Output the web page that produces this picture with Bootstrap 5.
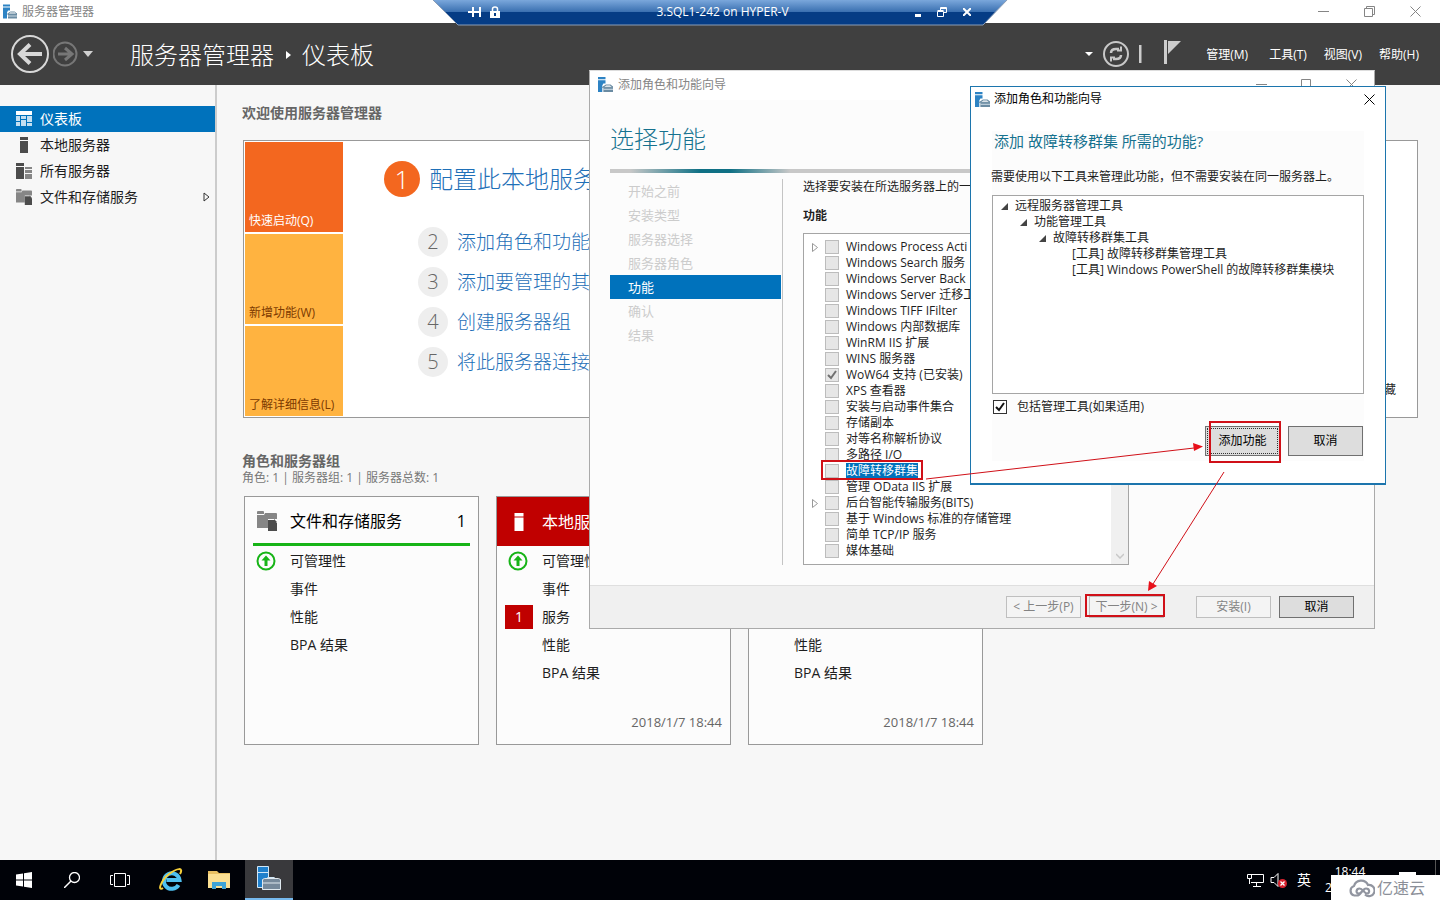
<!DOCTYPE html>
<html lang="zh-CN">
<head>
<meta charset="utf-8">
<meta name="viewport" content="width=device-width, initial-scale=1">
<title>服务器管理器</title>
<link href="https://cdn.jsdelivr.net/npm/bootstrap@5.3.0/dist/css/bootstrap.min.css" rel="stylesheet">
<style>
  body { font: 12px/16px "Open Sans", "Noto Sans CJK SC", sans-serif; color: #1e1e1e; background: #f7f7f7; }
  a { text-decoration: none; }
  button { font: inherit; color: inherit; }
  svg { display: block; flex: none; }
  .plain-btn { border: 0; background: none; padding: 0; }

  .app-title { height: 23px; background: #fff; color: #858585; padding: 0 19px 0 3px; gap: 5px; }
  .app-title .win-ctl { gap: 35px; }
  .app-head { height: 62px; background: #404040; color: #fff; padding: 0 21px 0 11px; }
  .crumb { font-size: 24px; line-height: 32px; font-weight: 300; margin-left: 37px; padding-top: 2px; }
  .menu-links { padding-top: 2px; }
  .menu-links a { color: #fff; margin-left: 17px; }
  .menu-links a:first-child { margin-left: 24px; }
  .head-tools { gap: 9px; }

  .side { width: 217px; border-right: 2px solid #ccc; padding-top: 21px; flex: none; }
  .side a { height: 26px; font-size: 14px; color: #1e1e1e; padding: 0 4px 0 15px; gap: 7px; }
  .side a.on { background: #0072bc; color: #fff; }

  .dash { padding: 19px 22px 0 25px; }
  .dash h2 { font-size: 14px; line-height: 18px; font-weight: 700; color: #666; margin: 0; }
  .welcome { border: 1px solid #999; background: #fff; height: 278px; margin: 18px 0 0 1px; padding: 1px; }
  .tiles { width: 98px; gap: 2px; }
  .tile { flex: 1; background: #ffb340; color: #7c3a00; padding: 0 4px 3px; display: flex; align-items: flex-end; white-space: nowrap; }
  .tile.hot { background: #f3671f; color: #fff; }
  .steps { padding: 18px 0 0 40px; white-space: nowrap; font-weight: 300; }
  .steps a { color: #1f70b8; font-size: 19px; line-height: 26px; }
  .steps li { height: 30px; margin-bottom: 10px; gap: 9px; padding-left: 35px; }
  .steps li.first { height: 38px; margin-bottom: 29px; padding-left: 1px; }
  .steps li.first a { font-size: 24px; line-height: 32px; }
  .num { width: 30px; height: 30px; border-radius: 50%; background: #eee; color: #666; font-size: 20px; display: flex; align-items: center; justify-content: center; }
  .first .num { width: 36px; height: 36px; background: #f3671f; color: #fff; font-size: 26px; }
  .hide-link { color: #1e1e1e; margin: auto 20px 18px auto; }

  .group-head { margin-top: 34px; color: #777; }
  .groups { gap: 17px; margin-top: 10px; padding-left: 2px; }
  .group { width: 235px; height: 249px; border: 1px solid #999; background: #fcfcfc; color: #1e1e1e; }
  .group-top { height: 49px; font-size: 16px; color: #000; padding: 0 12px 0 11px; }
  .group-top.ok { border-bottom: 3px solid #17b417; margin: 0 8px; padding: 1px 4px 0 3px; }
  .group-top.bad { background: #c00000; color: #fff; }
  .ico { width: 34px; flex: none; display: flex; }
  .group ul { padding-top: 1px; }
  .group li { height: 28px; font-size: 14px; padding-left: 8px; }
  .group li .ico { width: 37px; padding-left: 3px; }
  .group li .flagged { padding-left: 0; }
  .alert-num { width: 28px; height: 24px; background: #c00000; color: #fff; display: flex; align-items: center; justify-content: center; }
  .stamp { color: #666; font-size: 13px; padding: 0 8px 14px; text-align: right; margin-top: auto; }

  .conn { left: 50%; top: 0; width: 576px; height: 26px; transform: translateX(-50%); color: #fff; }
  .conn .inner { padding: 0 37px 2px 36px; height: 26px; }
  .conn-name { padding-left: 30px; }

  .wizard { left: 589px; top: 70px; width: 786px; height: 559px; border: 1px solid #aaa; border-top-color: #ddd; background: #fcfcfc; }
  .wizard-title { height: 29px; background: #fff; color: #858585; padding: 0 17px 2px 8px; gap: 5px; }
  .wizard-title .win-ctl { gap: 34px; }
  .wizard h1 { color: #16728f; font-size: 24px; line-height: 32px; font-weight: 300; margin: 23px 0 14px 20px; }
  .bar { height: 4px; margin-left: 20px; background: linear-gradient(90deg, #c8c8c8 20px, #0f7085 90px, #0f7085 120px, #c8c8c8 180px); }
  .wiz-nav { width: 173px; margin: 6px 0 0 20px; border-right: 1px solid #c4c4c4; height: 386px; }
  .wiz-nav span { display: flex; align-items: center; height: 24px; width: 171px; padding-left: 18px; font-size: 13px; color: #ccc; }
  .wiz-nav span.on { background: #0072bc; color: #fff; }
  .wiz-main { padding: 6px 0 0 20px; }
  .list-name { margin-top: 13px; font-weight: 700; }
  .feats { width: 326px; height: 332px; border: 1px solid #a5a5a5; background: #fff; margin-top: 9px; }
  .feats li { height: 16px; }
  .feats ul { padding: 5px 0 0 8px; white-space: nowrap; }
  .twist { width: 13px; flex: none; }
  .tick { appearance: none; width: 14px; height: 14px; border: 1px solid #bcbcbc; background: #e6e6e6; margin: 0 7px 0 0; flex: none; }
  .tick:checked { background: #e6e6e6 url("data:image/svg+xml,%3Csvg xmlns='http://www.w3.org/2000/svg' viewBox='0 0 12 12'%3E%3Cpath d='M2 6l3 3 5-7' fill='none' stroke='%23707070' stroke-width='2'/%3E%3C/svg%3E"); }
  .tick.live { border-color: #333; background-color: #fff; margin: 0 10px 0 1px; }
  .tick.live:checked { background-image: url("data:image/svg+xml,%3Csvg xmlns='http://www.w3.org/2000/svg' viewBox='0 0 12 12'%3E%3Cpath d='M2 6l3 3 5-7' fill='none' stroke='%23111' stroke-width='2'/%3E%3C/svg%3E"); }
  .picked { background: #0072bc; color: #fff; }
  .scroll { width: 17px; background: #f0f0f0; display: flex; align-items: flex-end; justify-content: center; padding-bottom: 5px; }
  .wiz-foot { height: 43px; background: #f0f0f0; border-top: 1px solid #dfdfdf; padding-right: 20px; gap: 8px; }
  .win-btn { width: 75px; height: 22px; border: 1px solid #707070; background: #ddd; color: #000; padding: 0; white-space: nowrap; }
  .win-btn:disabled { border-color: #bfbfbf; background: #f4f4f4; color: #838383; }
  .win-btn.tall { height: 30px; }
  .win-btn.focus-dots { outline: 1px dotted #333; outline-offset: -3px; }

  .dlg { left: 970px; top: 86px; width: 416px; height: 399px; border: 1px solid #1c75ad; border-bottom-width: 2px; background: #fff; color: #1e1e1e; }
  .dlg-title { height: 24px; color: #000; padding: 0 10px 0 4px; gap: 4px; }
  .dlg-body { margin: 20px 21px 0; background: #fcfcfc; height: 330px; }
  .dlg h2 { color: #16728f; font-size: 15px; line-height: 20px; font-weight: 400; margin: 0; padding-left: 2px; }
  .dlg p { margin: 18px 0 10px -1px; white-space: nowrap; }
  .tree { height: 199px; border: 1px solid #a5a5a5; background: #fff; padding: 2px 0 0 8px; list-style: none; margin: 0; white-space: nowrap; }
  .tree ul { list-style: none; padding-left: 19px; }
  .tree .leaf { padding-left: 14px; }
  .node { display: flex; align-items: center; gap: 7px; height: 16px; }
  .dlg-opt { margin-top: 5px; }
  .dlg-actions { gap: 8px; margin-top: 11px; padding-right: 1px; }
  .marks { left: 0; top: 0; pointer-events: none; }

  .taskbar { height: 40px; background: #000208; color: #fff; }
  .taskbar .slot { width: 48px; height: 40px; display: flex; align-items: center; justify-content: center; }
  .slot.pinned { margin-left: 3px; }
  .slot.active { background: #39393c; border-bottom: 2px solid #76b9ed; margin-left: 2px; }
  .tray { gap: 6px; padding-right: 24px; }
  .ime { font-size: 14px; }
  .note { margin: 0 0 10px 18px; }
  .peek { right: 4px; top: 0; width: 1px; height: 15px; background: #555; }
  .brand { right: 0; bottom: 0; width: 109px; height: 25px; background: #fff; color: #8b8f98; font-size: 16px; gap: 2px; padding-left: 18px; }
</style>
</head>
<body class="vh-100 overflow-hidden position-relative d-flex flex-column">

<svg width="0" height="0" class="position-absolute" aria-hidden="true">
  <symbol id="sm" viewBox="0 0 14 14"><path d="M0 0h7v2H0zM0 3h7v3H5l-1 2v6H0z" fill="#2d83c4"/><path d="M5 9h9v5H5z" fill="#6b8ca3"/><path d="M4.500 9.500l3-2h4l2.500 2z" fill="#fff" stroke="#6b8ca3"/><path d="M5 11.500h9" stroke="#c9d8e2"/></symbol>
  <symbol id="srv" viewBox="0 0 16 16"><path d="M4 0h8v3H4zM4 4h8v12H4z" fill="currentColor"/></symbol>
  <symbol id="files" viewBox="0 0 20 20"><path d="M0 1q0-1 1-1h5q1 0 1 1v2H0zM0 4h7l1-2h11q1 0 1 1v5h-9v9H0z" fill="#868686"/><path d="M11 9h6l3 3v8h-9z" fill="#4c4c4c"/><path d="M17 8l3 3h-3z" fill="#4c4c4c"/></symbol>
  <symbol id="up" viewBox="0 0 20 20"><circle cx="10" cy="10" r="8.500" fill="none" stroke="#17b417" stroke-width="2"/><path d="M10 4.500l4.500 5h-3V15h-3V9.500h-3z" fill="#17b417"/></symbol>
  <symbol id="min" viewBox="0 0 11 11"><path d="M0 5.500h11" stroke="currentColor"/></symbol>
  <symbol id="close" viewBox="0 0 11 11"><path d="M.5.500l10 10M10.500.500l-10 10" stroke="currentColor"/></symbol>
  <symbol id="fold" viewBox="0 0 6 9"><path d="M.5.500v8l5-4z" fill="#fff" stroke="#999"/></symbol>
  <symbol id="open" viewBox="0 0 7 7"><path d="M7 0v7H0z" fill="#444"/></symbol>
</svg>

<header class="app-title d-flex align-items-center">
  <svg width="14" height="15"><use href="#sm"/></svg><span>服务器管理器</span>
  <div class="win-ctl d-flex ms-auto">
    <button class="plain-btn" aria-label="最小化"><svg width="11" height="11"><use href="#min"/></svg></button>
    <button class="plain-btn" aria-label="还原"><svg width="11" height="11" fill="none" stroke="currentColor"><path d="M.5 2.500h8v8h-8zM2.500 2.500v-2h8v8h-2"/></svg></button>
    <button class="plain-btn" aria-label="关闭"><svg width="11" height="11"><use href="#close"/></svg></button>
  </div>
</header>

<nav class="app-head d-flex align-items-center">
  <button class="plain-btn" aria-label="后退"><svg width="38" height="38" viewBox="0 0 38 38" fill="none" stroke="#d8d8d8"><circle cx="19" cy="19" r="18" stroke-width="2"/><path d="M31 19H9M19 9.500L9 19l10 9.500" stroke-width="4"/></svg></button>
  <button class="plain-btn ms-1" aria-label="前进"><svg width="26" height="26" viewBox="0 0 26 26" fill="none" stroke="#777"><circle cx="12" cy="13" r="11.500" stroke-width="2"/><path d="M5 13h14M12 7l7 6-7 6" stroke-width="3"/></svg></button>
  <svg class="ms-1" width="10" height="6"><path d="M0 0h10L5 6z" fill="#d0d0d0"/></svg>
  <div class="crumb d-flex align-items-center"><span>服务器管理器</span><svg class="mx-2" width="12" height="8"><path d="M4 0v8l5-4z" fill="#fff"/></svg><span>仪表板</span></div>
  <div class="d-flex align-items-center ms-auto">
    <div class="head-tools d-flex align-items-center">
      <svg width="8" height="4"><path d="M0 0h8L4 4z" fill="#fff"/></svg>
      <button class="plain-btn" aria-label="刷新"><svg width="28" height="28" viewBox="0 0 28 28" fill="none" stroke="#c8c8c8"><circle cx="14" cy="14" r="12" stroke-width="2"/><path d="M9 13q0-4 5-4h3M19 15q0 4-5 4h-3" stroke-width="2.500"/><path d="M15 10.500h4V6.500M13 17.500H9v4" stroke-width="2"/></svg></button>
      <svg width="5" height="18"><path d="M0 0h2.500v18H0z" fill="#ccc"/></svg>
    </div>
    <button class="plain-btn ms-3 ps-1 pb-1" aria-label="通知"><svg width="18" height="24" fill="#ccc"><path d="M0 0h3v24H0zM4 1h13L4 14z"/></svg></button>
    <div class="menu-links"><a href="#">管理(M)</a><a href="#" class="ps-1">工具(T)</a><a href="#">视图(V)</a><a href="#">帮助(H)</a></div>
  </div>
</nav>

<div class="d-flex flex-fill overflow-hidden">
  <nav class="side">
    <a href="#" class="on d-flex align-items-center"><svg width="18" height="16" viewBox="0 0 18 16" fill="#c4dff1"><path d="M1 0h16v4H1z" fill="#fff"/><path d="M1 5h4v5H1zM1 11h4v4H1zM6 5h5v3H6zM6 9h5v6H6zM12 5h5v6h-5zM12 12h5v3h-5z"/></svg>仪表板</a>
    <a href="#" class="d-flex align-items-center"><svg width="18" height="16" color="#4c4c4c"><use href="#srv"/></svg>本地服务器</a>
    <a href="#" class="d-flex align-items-center"><svg width="18" height="16" viewBox="0 0 18 16"><path d="M1 0h8v3H1zM1 4h8v12H1z" fill="#4c4c4c"/><path d="M10 4h7v2h-7zM10 7h7v3h-7zM10 11h7v5h-7z" fill="#868686"/></svg>所有服务器</a>
    <a href="#" class="d-flex align-items-center"><svg width="18" height="16"><use href="#files"/></svg>文件和存储服务<svg class="ms-auto" width="8" height="10"><path d="M1 1v8l5-4z" fill="none" stroke="#333"/></svg></a>
  </nav>

  <main class="dash flex-fill">
    <h2>欢迎使用服务器管理器</h2>
    <section class="welcome d-flex">
      <div class="tiles d-flex flex-column">
        <button class="plain-btn tile hot">快速启动(Q)</button>
        <button class="plain-btn tile">新增功能(W)</button>
        <button class="plain-btn tile">了解详细信息(L)</button>
      </div>
      <ol class="steps list-unstyled m-0">
        <li class="first d-flex align-items-center"><span class="num">1</span><a href="#">配置此本地服务器</a></li>
        <li class="d-flex align-items-center"><span class="num">2</span><a href="#">添加角色和功能</a></li>
        <li class="d-flex align-items-center"><span class="num">3</span><a href="#">添加要管理的其他</a></li>
        <li class="d-flex align-items-center"><span class="num">4</span><a href="#">创建服务器组</a></li>
        <li class="d-flex align-items-center"><span class="num">5</span><a href="#">将此服务器连接</a></li>
      </ol>
      <a href="#" class="hide-link">隐藏</a>
    </section>

    <div class="group-head"><h2>角色和服务器组</h2>角色: 1 | 服务器组: 1 | 服务器总数: 1</div>
    <div class="groups d-flex">
      <section class="group d-flex flex-column">
        <div class="group-top ok d-flex align-items-center"><span class="ico"><svg width="22" height="20"><use href="#files"/></svg></span>文件和存储服务<span class="ms-auto">1</span></div>
        <ul class="list-unstyled m-0">
          <li class="d-flex align-items-center"><span class="ico"><svg width="20" height="20"><use href="#up"/></svg></span>可管理性</li>
          <li class="d-flex align-items-center"><span class="ico"></span>事件</li>
          <li class="d-flex align-items-center"><span class="ico"></span>性能</li>
          <li class="d-flex align-items-center"><span class="ico"></span>BPA 结果</li>
        </ul>
      </section>
      <section class="group d-flex flex-column">
        <div class="group-top bad d-flex align-items-center"><span class="ico"><svg width="22" height="18"><use href="#srv"/></svg></span>本地服务器</div>
        <ul class="list-unstyled m-0">
          <li class="d-flex align-items-center"><span class="ico"><svg width="20" height="20"><use href="#up"/></svg></span>可管理性</li>
          <li class="d-flex align-items-center"><span class="ico"></span>事件</li>
          <li class="d-flex align-items-center"><span class="ico flagged"><span class="alert-num">1</span></span>服务</li>
          <li class="d-flex align-items-center"><span class="ico"></span>性能</li>
          <li class="d-flex align-items-center"><span class="ico"></span>BPA 结果</li>
        </ul>
        <div class="stamp">2018/1/7 18:44</div>
      </section>
      <section class="group d-flex flex-column">
        <div class="group-top bad d-flex align-items-center"></div>
        <ul class="list-unstyled m-0">
          <li></li>
          <li></li>
          <li class="d-flex align-items-center"><span class="ico flagged"><span class="alert-num"></span></span></li>
          <li class="d-flex align-items-center"><span class="ico"></span>性能</li>
          <li class="d-flex align-items-center"><span class="ico"></span>BPA 结果</li>
        </ul>
        <div class="stamp">2018/1/7 18:44</div>
      </section>
    </div>
  </main>
</div>

<footer class="taskbar d-flex position-relative">
  <button class="plain-btn slot" aria-label="开始"><svg width="16" height="16" fill="#fff"><path d="M0 2.500L7 1.500v6H0zM8 1.300L16 0v7.500H8zM0 8.500h7v6l-7-1zM8 8.500h8V16l-8-1.300z"/></svg></button>
  <button class="plain-btn slot" aria-label="搜索"><svg width="16" height="16" fill="none" stroke="#fff"><circle cx="10.500" cy="5.500" r="5" stroke-width="1.300"/><path d="M7 9l-7 7" stroke-width="1.500"/></svg></button>
  <button class="plain-btn slot" aria-label="任务视图"><svg width="20" height="14" fill="none" stroke="#fff"><path d="M4.500.500h11v13h-11zM3 2.500H.5v9H3M17 2.500h2.500v9H17"/></svg></button>
  <button class="plain-btn slot pinned" aria-label="Internet Explorer"><svg width="24" height="24" viewBox="0 0 24 24" fill="none"><path d="M19.500 17a7.800 7.800 0 1 1 1-5H7.500" stroke="#4ec0f0" stroke-width="4"/><path d="M4 20C-2 24 2 12 10 6S25-1 21 6" stroke="#f5cf3a" stroke-width="2"/></svg></button>
  <button class="plain-btn slot" aria-label="文件资源管理器"><svg width="22" height="18" viewBox="0 0 22 18"><path d="M0 0h9l2 2h11v15H0z" fill="#e9c062"/><path d="M0 3h22v14H0z" fill="#fbdf92"/><path d="M4 18v-7h14v7h-4v-3H8v3z" fill="#3fa3d6"/></svg></button>
  <button class="plain-btn slot active" aria-label="服务器管理器"><svg width="24" height="26" viewBox="0 0 24 26"><path d="M.5.500h11v21H.5z" fill="#1f80cc" stroke="#cfe6f7"/><path d="M0 6.500h12" stroke="#cfe6f7"/><path d="M9 13l2-1.500h6l2 1.500" fill="none" stroke="#cfe6f7"/><path d="M5.500 13.500l2-1h14l2 1v10h-18z" fill="#76899b" stroke="#dfe8ee"/><path d="M6 17h17" stroke="#dfe8ee"/></svg></button>
  <div class="tray d-flex align-items-center ms-auto">
    <svg width="17" height="14" fill="none" stroke="#fff"><path d="M4 1.500h12.500v8H4M9.500 10v3M6 13.500h8M.5 1.500h4v4h-4zM2.500 6v5"/></svg>
    <svg width="17" height="15"><path d="M1 4.500h3l4-4v13l-4-4H1z" fill="none" stroke="#fff"/><circle cx="12.500" cy="10.500" r="4.500" fill="#d8232f"/><path d="M10.500 8.500l4 4M14.500 8.500l-4 4" stroke="#fff" stroke-width="1.300"/></svg>
    <span class="ime px-1">英</span>
    <div class="text-center ps-1"><div>18:44</div><div>2018/1/7</div></div>
    <svg class="note" width="17" height="6"><path d="M0 0h17v6H0z" fill="#fff"/></svg>
  </div>
  <div class="peek position-absolute"></div>
  <div class="brand position-absolute d-flex align-items-center">
    <svg width="26" height="20" viewBox="0 0 26 20" fill="none" stroke="#9195a0" stroke-width="2.200"><path d="M5 17.500a5 5 0 0 1 0-9.500 7.500 7.500 0 0 1 14-1 5.600 5.600 0 1 1-3 9.500"/><path d="M5 17.500h3c4 0 5-7 9-7s4 5 1 5-4-5-7.500-5-4 5-1 5 4-3 6-4"/></svg>亿速云
  </div>
</footer>

<div class="conn position-absolute">
  <svg class="position-absolute" width="576" height="26"><defs><linearGradient id="cg" x2="0" y2="1"><stop offset="0" stop-color="#80acdf"/><stop offset=".5" stop-color="#396fb0"/><stop offset=".51" stop-color="#053c85"/><stop offset="1" stop-color="#053c85"/></linearGradient></defs><path d="M0-1h576l-25 26H26z" fill="url(#cg)" stroke="#8a9cb5"/></svg>
  <div class="inner position-relative d-flex align-items-center">
    <button class="plain-btn" aria-label="固定"><svg width="14" height="10" fill="none" stroke="#fff" stroke-width="2"><path d="M0 5h5M5 0v10M5 5h7M12 0v10"/></svg></button>
    <svg class="ms-2" width="10" height="12"><path d="M2.500 5V3q0-2 2.500-2t2.500 2v2" fill="none" stroke="#fff" stroke-width="1.500"/><path d="M0 5h10v7H0z" fill="#fff"/><path d="M5 7v3" stroke="#053c85" stroke-width="2"/></svg>
    <span class="conn-name flex-fill text-center">3.SQL1-242 on HYPER-V</span>
    <button class="plain-btn" aria-label="最小化"><svg width="6" height="10"><path d="M0 8.500h6" stroke="#fff" stroke-width="3"/></svg></button>
    <button class="plain-btn ms-3" aria-label="还原"><svg width="10" height="10" fill="none" stroke="#fff"><path d="M.5 4.500h6v5h-6zM.5 3.500h6M3.500 3V.5h6v5H7M3.500 1.500h6"/></svg></button>
    <button class="plain-btn ms-3" aria-label="关闭"><svg width="8" height="8"><path d="M0 0l8 8M8 0L0 8" stroke="#fff" stroke-width="2"/></svg></button>
  </div>
</div>

<section class="wizard position-absolute d-flex flex-column">
  <div class="wizard-title d-flex align-items-center">
    <svg width="15" height="15"><use href="#sm"/></svg><span>添加角色和功能向导</span>
    <div class="win-ctl d-flex ms-auto">
      <button class="plain-btn" aria-label="最小化"><svg width="11" height="11"><use href="#min"/></svg></button>
      <button class="plain-btn" aria-label="最大化"><svg width="11" height="11"><path d="M.5.500h9v10h-9z" fill="none" stroke="currentColor"/></svg></button>
      <button class="plain-btn" aria-label="关闭"><svg width="11" height="11"><use href="#close"/></svg></button>
    </div>
  </div>
  <h1>选择功能</h1>
  <div class="bar"></div>
  <div class="d-flex flex-fill">
    <div class="wiz-nav">
      <span>开始之前</span><span>安装类型</span><span>服务器选择</span><span>服务器角色</span><span class="on">功能</span><span>确认</span><span>结果</span>
    </div>
    <div class="wiz-main">
      <div class="text-nowrap">选择要安装在所选服务器上的一个</div>
      <div class="list-name">功能</div>
      <div class="feats d-flex">
        <ul class="list-unstyled flex-fill m-0">
          <li class="d-flex align-items-center"><span class="twist"><svg width="6" height="9"><use href="#fold"/></svg></span><input class="tick" type="checkbox" disabled id="f1"><label for="f1">Windows Process Acti</label></li>
          <li class="d-flex align-items-center"><span class="twist"></span><input class="tick" type="checkbox" disabled id="f2"><label for="f2">Windows Search 服务</label></li>
          <li class="d-flex align-items-center"><span class="twist"></span><input class="tick" type="checkbox" disabled id="f3"><label for="f3">Windows Server Back</label></li>
          <li class="d-flex align-items-center"><span class="twist"></span><input class="tick" type="checkbox" disabled id="f4"><label for="f4">Windows Server 迁移工</label></li>
          <li class="d-flex align-items-center"><span class="twist"></span><input class="tick" type="checkbox" disabled id="f5"><label for="f5">Windows TIFF IFilter</label></li>
          <li class="d-flex align-items-center"><span class="twist"></span><input class="tick" type="checkbox" disabled id="f6"><label for="f6">Windows 内部数据库</label></li>
          <li class="d-flex align-items-center"><span class="twist"></span><input class="tick" type="checkbox" disabled id="f7"><label for="f7">WinRM IIS 扩展</label></li>
          <li class="d-flex align-items-center"><span class="twist"></span><input class="tick" type="checkbox" disabled id="f8"><label for="f8">WINS 服务器</label></li>
          <li class="d-flex align-items-center"><span class="twist"></span><input class="tick" type="checkbox" disabled checked id="f9"><label for="f9">WoW64 支持 (已安装)</label></li>
          <li class="d-flex align-items-center"><span class="twist"></span><input class="tick" type="checkbox" disabled id="f10"><label for="f10">XPS 查看器</label></li>
          <li class="d-flex align-items-center"><span class="twist"></span><input class="tick" type="checkbox" disabled id="f11"><label for="f11">安装与启动事件集合</label></li>
          <li class="d-flex align-items-center"><span class="twist"></span><input class="tick" type="checkbox" disabled id="f12"><label for="f12">存储副本</label></li>
          <li class="d-flex align-items-center"><span class="twist"></span><input class="tick" type="checkbox" disabled id="f13"><label for="f13">对等名称解析协议</label></li>
          <li class="d-flex align-items-center"><span class="twist"></span><input class="tick" type="checkbox" disabled id="f14"><label for="f14">多路径 I/O</label></li>
          <li class="d-flex align-items-center"><span class="twist"></span><input class="tick" type="checkbox" disabled id="f15"><label for="f15" class="picked">故障转移群集</label></li>
          <li class="d-flex align-items-center"><span class="twist"></span><input class="tick" type="checkbox" disabled id="f16"><label for="f16">管理 OData IIS 扩展</label></li>
          <li class="d-flex align-items-center"><span class="twist"><svg width="6" height="9"><use href="#fold"/></svg></span><input class="tick" type="checkbox" disabled id="f17"><label for="f17">后台智能传输服务(BITS)</label></li>
          <li class="d-flex align-items-center"><span class="twist"></span><input class="tick" type="checkbox" disabled id="f18"><label for="f18">基于 Windows 标准的存储管理</label></li>
          <li class="d-flex align-items-center"><span class="twist"></span><input class="tick" type="checkbox" disabled id="f19"><label for="f19">简单 TCP/IP 服务</label></li>
          <li class="d-flex align-items-center"><span class="twist"></span><input class="tick" type="checkbox" disabled id="f20"><label for="f20">媒体基础</label></li>
        </ul>
        <div class="scroll"><svg width="8" height="6"><path d="M0 1l4 4 4-4" fill="none" stroke="#c8c8c8" stroke-width="1.500"/></svg></div>
      </div>
    </div>
  </div>
  <div class="wiz-foot d-flex align-items-center justify-content-end">
    <button class="win-btn" disabled>&lt; 上一步(P)</button>
    <button class="win-btn" disabled>下一步(N) &gt;</button>
    <button class="win-btn ms-4" disabled>安装(I)</button>
    <button class="win-btn">取消</button>
  </div>
</section>

<section class="dlg position-absolute">
  <div class="dlg-title d-flex align-items-center">
    <svg width="15" height="15"><use href="#sm"/></svg><span>添加角色和功能向导</span>
    <button class="plain-btn ms-auto" aria-label="关闭"><svg width="11" height="11"><use href="#close"/></svg></button>
  </div>
  <div class="dlg-body">
    <h2>添加 故障转移群集 所需的功能?</h2>
    <p>需要使用以下工具来管理此功能，但不需要安装在同一服务器上。</p>
    <ul class="tree">
      <li><div class="node"><svg width="7" height="7"><use href="#open"/></svg>远程服务器管理工具</div>
        <ul>
          <li><div class="node"><svg width="7" height="7"><use href="#open"/></svg>功能管理工具</div>
            <ul>
              <li><div class="node"><svg width="7" height="7"><use href="#open"/></svg>故障转移群集工具</div>
                <ul>
                  <li class="node leaf">[工具] 故障转移群集管理工具</li>
                  <li class="node leaf">[工具] Windows PowerShell 的故障转移群集模块</li>
                </ul>
              </li>
            </ul>
          </li>
        </ul>
      </li>
    </ul>
    <div class="dlg-opt d-flex align-items-center"><input class="tick live" type="checkbox" checked id="inc"><label for="inc">包括管理工具(如果适用)</label></div>
    <div class="dlg-actions d-flex justify-content-end"><button class="win-btn tall focus-dots">添加功能</button><button class="win-btn tall">取消</button></div>
  </div>
</section>

<svg class="marks position-absolute" width="1440" height="900" fill="none" stroke="#d01018">
  <path d="M822 461h100v18H822zM1210 422h70v40h-70zM1086 595h78v21h-78z" stroke-width="2"/>
  <path d="M926 479L1194 448M1224 472L1153 584" stroke-width="1"/>
  <path d="M1203 446.500l-10-3.500 1 8zM1148 591l1-10 8 5z" fill="#e8101a" stroke="none"/>
</svg>

<script src="https://cdn.jsdelivr.net/npm/bootstrap@5.3.0/dist/js/bootstrap.bundle.min.js"></script>
</body>
</html>
